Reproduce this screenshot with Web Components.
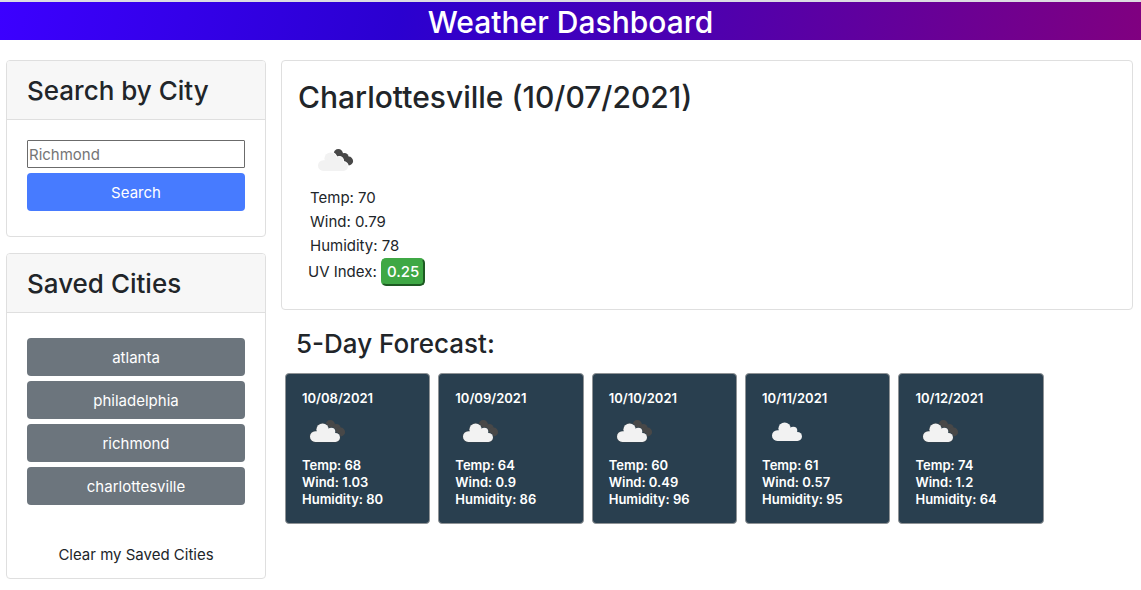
<!DOCTYPE html>
<html lang="en">
<head>
<meta charset="utf-8">
<meta name="viewport" content="width=device-width, initial-scale=1">
<title>Weather Dashboard</title>
<style>
body { margin: 0; background: #fff; color: #212529; font: 400 15px/24px Inter, "Liberation Sans", sans-serif; }
</style>
</head>
<body>
<weather-app></weather-app>
<script>
const define = (name, html, setup) => {
  const template = document.createElement('template');
  template.innerHTML = html;
  customElements.define(name, class extends HTMLElement {
    constructor() {
      super();
      this.attachShadow({ mode: 'open' }).append(template.content.cloneNode(true));
    }
    connectedCallback() {
      if (setup) setup(this.shadowRoot, this);
    }
  });
};

define('page-banner', `
<style>
:host { display: block; border-top: 2px solid #dcdce2; background: linear-gradient(100deg, #3c00ff, #2b00d0 35%, purple); color: #fff; text-align: center; }
h1 { margin: 0; padding-top: 2px; font-size: 30px; line-height: 36px; font-weight: 500; }
</style>
<h1><slot></slot></h1>`);

define('side-card', `
<style>
:host { display: block; border: 1px solid #dfdfdf; border-radius: 4px; background: #fff; overflow: hidden; }
h2 { margin: 0; padding: 13px 20px 11px; font-size: 26px; line-height: 34px; font-weight: 500; background: #f7f7f7; border-bottom: 1px solid #dfdfdf; }
div { padding: 20px; }
</style>
<h2><slot name="title"></slot></h2>
<div><slot></slot></div>`);

define('city-search', `
<style>
:host { display: block; padding-bottom: 5px; }
form { display: grid; gap: 5px; }
input { box-sizing: border-box; width: 100%; height: 28px; margin: 0; padding: 1px; border: 1px solid #6b6b6b; border-radius: 1px; font: inherit; color: #212529; }
input::placeholder { color: #757575; }
button { height: 38px; padding: 2px 6px 0; border: 0; border-radius: 4px; background: #477bff; color: #fff; font: inherit; cursor: pointer; }
</style>
<form>
<input type="text" aria-label="City" placeholder="Richmond">
<button type="button">Search</button>
</form>`);

define('saved-cities', `
<style>
:host { display: grid; gap: 5px; padding-top: 5px; }
button { height: 38px; padding: 2px 6px 0; border: 0; border-radius: 4px; background: #6c757d; color: #fff; font: inherit; cursor: pointer; }
.clear { margin-top: 25px; margin-bottom: -15px; background: none; color: #212529; }
</style>
<button type="button">atlanta</button>
<button type="button">philadelphia</button>
<button type="button">richmond</button>
<button type="button">charlottesville</button>
<button type="button" class="clear">Clear my Saved Cities</button>`);

define('cloud-icon', `
<style>
:host { display: block; width: 50px; height: 50px; }
svg { display: block; }
.back { fill: #484848; }
.edge { fill: var(--cloud-gap, #fff); stroke: var(--cloud-gap, #fff); stroke-width: 1.6; }
.front { fill: #f2f2f2; }
:host([kind="scattered"]) .back, :host([kind="scattered"]) .edge { display: none; }
:host([kind="scattered"]) .front { transform: translate(2px, -1px); }
</style>
<svg width="50" height="50" viewBox="0 0 50 50" aria-hidden="true">
<defs>
<g id="cloud">
<circle cx="13.3" cy="29.6" r="5.3"/>
<circle cx="20.6" cy="22.6" r="6.2"/>
<circle cx="29.3" cy="24.8" r="4"/>
<circle cx="33.5" cy="30.4" r="4.5"/>
<path d="M13.3 34.9V25L18 23H29L33.5 27V34.9Z"/>
</g>
</defs>
<g class="back">
<circle cx="28.3" cy="17.8" r="4.7"/>
<circle cx="34.4" cy="21.3" r="4.3"/>
<circle cx="38.7" cy="25" r="4.4"/>
</g>
<use class="edge" href="#cloud"/>
<use class="front" href="#cloud"/>
</svg>`);

define('current-weather', `
<style>
:host { display: block; border: 1px solid #dfdfdf; border-radius: 4px; padding: 16px 16px 23px; }
h2 { margin: 0 0 19px; font-size: 30px; line-height: 40px; font-weight: 500; }
ul { margin: 0; padding: 0 12px; list-style: none; }
.uv { margin-left: 10px; line-height: 28px; }
button { box-sizing: border-box; height: 28px; padding: 0 4px; border: 2px solid; border-radius: 5px; background: #3fa845; border-color: #3fa845 #1d5a22 #1d5a22 #3fa845; color: #fff; font: 500 15px/24px Inter, sans-serif; }
cloud-icon { margin-left: 12px; }
</style>
<h2>Charlottesville (10/07/2021)</h2>
<cloud-icon></cloud-icon>
<ul>
<li>Temp: 70</li>
<li>Wind: 0.79</li>
<li>Humidity: 78</li>
</ul>
<div class="uv">UV Index: <button type="button">0.25</button></div>`);

define('forecast-day', `
<style>
:host { display: block; box-sizing: border-box; flex: 0 0 18%; padding: 0 4px; }
article { --cloud-gap: #33424c; border: 1px solid #8f9396; border-radius: 4px; background: #293f4f; color: #fff; padding: 16px 16px 15px; font-size: 13px; line-height: 17px; font-weight: 600; }
h3 { margin: 0; font: inherit; }
ul { margin: 0; padding: 0; list-style: none; }
</style>
<article>
<h3></h3>
<cloud-icon></cloud-icon>
<ul><li class="temp"></li><li class="wind"></li><li class="humidity"></li></ul>
</article>`, (root, host) => {
  root.querySelector('h3').textContent = host.getAttribute('date');
  root.querySelector('cloud-icon').setAttribute('kind', host.getAttribute('kind') || 'broken');
  root.querySelector('.temp').textContent = 'Temp: ' + host.getAttribute('temp');
  root.querySelector('.wind').textContent = 'Wind: ' + host.getAttribute('wind');
  root.querySelector('.humidity').textContent = 'Humidity: ' + host.getAttribute('humidity');
});

define('forecast-list', `
<style>
:host { display: block; }
h2 { margin: 0; padding: 17px 15px 12px; font-size: 26px; line-height: 34px; font-weight: 500; }
div { display: flex; }
</style>
<h2>5-Day Forecast:</h2>
<div>
<forecast-day date="10/08/2021" temp="68" wind="1.03" humidity="80"></forecast-day>
<forecast-day date="10/09/2021" temp="64" wind="0.9" humidity="86"></forecast-day>
<forecast-day date="10/10/2021" temp="60" wind="0.49" humidity="96"></forecast-day>
<forecast-day date="10/11/2021" temp="61" wind="0.57" humidity="95" kind="scattered"></forecast-day>
<forecast-day date="10/12/2021" temp="74" wind="1.2" humidity="64"></forecast-day>
</div>`);

define('weather-app', `
<style>
:host { display: block; }
.layout { display: grid; grid-template-columns: 260px minmax(0, 1fr); gap: 15px; padding: 20px 8px 11px 6px; align-items: start; }
aside { display: grid; gap: 16px; }
</style>
<page-banner>Weather Dashboard</page-banner>
<div class="layout">
<aside>
<side-card><span slot="title">Search by City</span><city-search></city-search></side-card>
<side-card><span slot="title">Saved Cities</span><saved-cities></saved-cities></side-card>
</aside>
<main>
<current-weather></current-weather>
<forecast-list></forecast-list>
</main>
</div>`);
</script>
</body>
</html>
